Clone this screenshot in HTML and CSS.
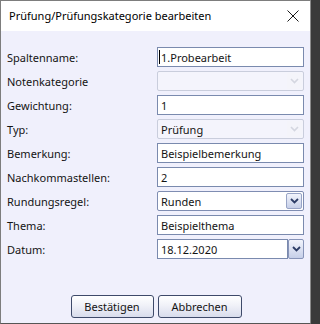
FILE: index.html
```html
<!DOCTYPE html>
<html lang="de">
<head>
<meta charset="utf-8">
<title>Prüfung bearbeiten</title>
<link rel="stylesheet" href="styles.css">
</head>
<body>
<div class="window">
  <div class="titlebar">
    <span class="title">Prüfung/Prüfungskategorie bearbeiten</span>
    <svg class="close" width="12" height="12" viewBox="0 0 12 12"><path d="M0.5 0.5 L11.5 11.5 M11.5 0.5 L0.5 11.5" stroke="#1a1a1a" stroke-width="1" fill="none"/></svg>
  </div>
  <div class="content">
    <div class="form">
      <label class="lbl">Spaltenname:</label>
      <div class="field text"><span class="caret"></span>1.Probearbeit</div>

      <label class="lbl">Notenkategorie</label>
      <div class="field combo disabled"><span class="val"></span><span class="arrow"><svg width="9" height="6" viewBox="0 0 9 6"><path d="M1 1 L4.5 4.5 L8 1" stroke="#d4d6e0" stroke-width="1.6" fill="none"/></svg></span></div>

      <label class="lbl">Gewichtung:</label>
      <div class="field text">1</div>

      <label class="lbl">Typ:</label>
      <div class="field combo disabled"><span class="val">Prüfung</span><span class="arrow"><svg width="9" height="6" viewBox="0 0 9 6"><path d="M1 1 L4.5 4.5 L8 1" stroke="#d4d6e0" stroke-width="1.6" fill="none"/></svg></span></div>

      <label class="lbl">Bemerkung:</label>
      <div class="field text">Beispielbemerkung</div>

      <label class="lbl">Nachkommastellen:</label>
      <div class="field text">2</div>

      <label class="lbl">Rundungsregel:</label>
      <div class="field combo active"><span class="val">Runden</span><span class="dropbtn"><svg width="9" height="6" viewBox="0 0 9 6"><path d="M1 1 L4.5 4.5 L8 1" stroke="#2c3c66" stroke-width="1.8" fill="none"/></svg></span></div>

      <label class="lbl">Thema:</label>
      <div class="field text">Beispielthema</div>

      <label class="lbl">Datum:</label>
      <div class="datepick">
        <div class="field text date">18.12.2020</div>
        <span class="dropbtn sep"><svg width="9" height="6" viewBox="0 0 9 6"><path d="M1 1 L4.5 4.5 L8 1" stroke="#2c3c66" stroke-width="1.8" fill="none"/></svg></span>
      </div>
    </div>
    <div class="buttons">
      <button class="btn ok">Bestätigen</button>
      <button class="btn cancel">Abbrechen</button>
    </div>
  </div>
</div>
</body>
</html>
```
FILE: styles.css
```css
* { box-sizing: border-box; }
html, body { margin: 0; padding: 0; }
body {
  width: 311px;
  height: 324px;
  background: #3a3a3a;
  font-family: "Noto Sans", "Open Sans", sans-serif;
  font-size: 11px;
  color: #141414;
  overflow: hidden;
}
.window {
  width: 311px;
  height: 324px;
  border: 1px solid #7d7d7d;
  border-right-color: #8a8a8a;
  border-bottom-color: #555;
  display: flex;
  flex-direction: column;
  background: #f0f0fc;
}
.titlebar {
  height: 30px;
  background: #ffffff;
  display: flex;
  align-items: center;
  justify-content: space-between;
  padding: 0 11px 0 8px;
}
.title {
  font-size: 11px;
  color: #000;
  padding-bottom: 1px;
}
.close { display: block; margin-top: -1px; }
.content {
  flex: 1;
  display: flex;
  flex-direction: column;
}
.form {
  display: grid;
  grid-template-columns: 150px 147px;
  grid-auto-rows: 20px;
  row-gap: 4px;
  padding: 16px 0 0 6px;
}
.lbl {
  display: flex;
  align-items: center;
  color: #141414;
  white-space: nowrap;
}
.field {
  height: 20px;
  display: flex;
  align-items: center;
  padding-left: 3px;
  white-space: nowrap;
  position: relative;
}
.text {
  background: #fff;
  border: 1px solid #7a8aae;
}
.caret {
  display: inline-block;
  width: 1px;
  height: 14px;
  background: #000;
  margin-left: -2px;
  margin-right: 1px;
}
.combo {
  justify-content: space-between;
  border-radius: 2px;
  padding-right: 1px;
}
.combo.disabled {
  background: #f4f4fc;
  border: 1px solid #c9cddc;
}
.combo.disabled .arrow {
  width: 15px;
  height: 16px;
  display: flex;
  align-items: center;
  justify-content: center;
  background: #f4f4fa;
}
.combo.active {
  background: #fff;
  border: 1px solid #7f8db2;
}
.dropbtn {
  width: 16px;
  height: 16px;
  display: flex;
  align-items: center;
  justify-content: center;
  border: 1px solid #98a4c6;
  border-radius: 2px;
  background: linear-gradient(#f2f4fc, #c6cfe8);
}
.datepick {
  display: flex;
}
.date {
  flex: 1;
}
.dropbtn.sep {
  width: 16px;
  height: 20px;
  border-color: #8794b8;
  margin-left: 0;
}
.buttons {
  display: flex;
  justify-content: center;
  gap: 4px;
  margin-top: 36px;
  padding-left: 1px;
}
.btn {
  font-family: "Noto Sans", "Open Sans", sans-serif;
  font-size: 11px;
  color: #141414;
  height: 23px;
  border: 1px solid #3e4a6a;
  border-radius: 3px;
  background: linear-gradient(#ffffff, #f0f1f8 45%, #d8dcec);
  padding: 0 0 1px 0;
}
.ok { width: 83px; }
.cancel { width: 84px; }
```
